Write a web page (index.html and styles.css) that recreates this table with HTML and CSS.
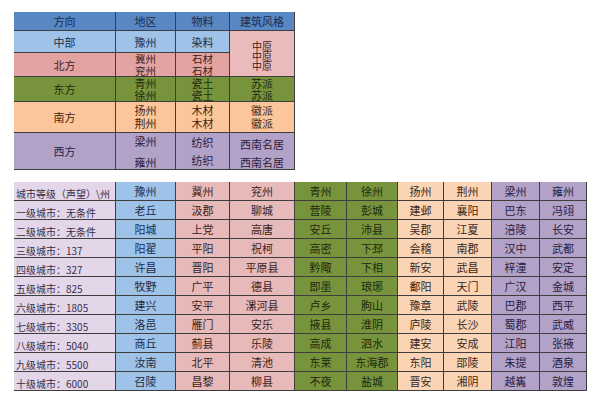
FILE: index.html
```html
<!DOCTYPE html>
<html lang="zh">
<head>
<meta charset="utf-8">
<link rel="stylesheet" href="styles.css">
</head>
<body>
<div class="page">
  <div class="t1">
    <div class="c hd">方向</div>
    <div class="c hd">地区</div>
    <div class="c hd">物料</div>
    <div class="c hd">建筑风格</div>

    <div class="c blue">中部</div>
    <div class="c blue">豫州</div>
    <div class="c blue">染料</div>
    <div class="c pinklt merged"><span>中原</span><span>中原</span><span>中原</span></div>

    <div class="c pink">北方</div>
    <div class="c pink tight"><span>冀州</span><span>兖州</span></div>
    <div class="c pink tight"><span>石材</span><span>石材</span></div>

    <div class="c green">东方</div>
    <div class="c green"><span>青州</span><span>徐州</span></div>
    <div class="c green"><span>瓷土</span><span>瓷土</span></div>
    <div class="c green"><span>苏派</span><span>苏派</span></div>

    <div class="c peach">南方</div>
    <div class="c peach lh13"><span>扬州</span><span>荆州</span></div>
    <div class="c peach lh13"><span>木材</span><span>木材</span></div>
    <div class="c peach lh13"><span>徽派</span><span>徽派</span></div>

    <div class="c lav">西方</div>
    <div class="c lav lh20"><span>梁州</span><span>雍州</span></div>
    <div class="c lav lh18"><span>纺织</span><span>纺织</span></div>
    <div class="c lav lh18 low"><span>西南名居</span><span>西南名居</span></div>
  </div>

  <div class="t2">
    <div class="c lbl">城市等级（声望）\州</div>
    <div class="c blue">豫州</div><div class="c pinkb">冀州</div><div class="c pinkb">兖州</div><div class="c green">青州</div><div class="c green">徐州</div><div class="c peachb">扬州</div><div class="c peachb">荆州</div><div class="c lav">梁州</div><div class="c lav">雍州</div>

    <div class="c lbl">一级城市：无条件</div>
    <div class="c blue">老丘</div><div class="c pinkb">汲郡</div><div class="c pinkb">聊城</div><div class="c green">营陵</div><div class="c green">彭城</div><div class="c peachb">建邺</div><div class="c peachb">襄阳</div><div class="c lav">巴东</div><div class="c lav">冯翊</div>

    <div class="c lbl">二级城市：无条件</div>
    <div class="c blue">阳城</div><div class="c pinkb">上党</div><div class="c pinkb">高唐</div><div class="c green">安丘</div><div class="c green">沛县</div><div class="c peachb">吴郡</div><div class="c peachb">江夏</div><div class="c lav">涪陵</div><div class="c lav">长安</div>

    <div class="c lbl">三级城市：137</div>
    <div class="c blue">阳翟</div><div class="c pinkb">平阳</div><div class="c pinkb">祝柯</div><div class="c green">高密</div><div class="c green">下邳</div><div class="c peachb">会稽</div><div class="c peachb">南郡</div><div class="c lav">汉中</div><div class="c lav">武都</div>

    <div class="c lbl">四级城市：327</div>
    <div class="c blue">许昌</div><div class="c pinkb">晋阳</div><div class="c pinkb">平原县</div><div class="c green">黔陬</div><div class="c green">下相</div><div class="c peachb">新安</div><div class="c peachb">武昌</div><div class="c lav">梓潼</div><div class="c lav">安定</div>

    <div class="c lbl">五级城市：825</div>
    <div class="c blue">牧野</div><div class="c pinkb">广平</div><div class="c pinkb">德县</div><div class="c green">即墨</div><div class="c green">琅琊</div><div class="c peachb">鄱阳</div><div class="c peachb">天门</div><div class="c lav">广汉</div><div class="c lav">金城</div>

    <div class="c lbl">六级城市：1805</div>
    <div class="c blue">建兴</div><div class="c pinkb">安平</div><div class="c pinkb">漯河县</div><div class="c green">卢乡</div><div class="c green">朐山</div><div class="c peachb">豫章</div><div class="c peachb">武陵</div><div class="c lav">巴郡</div><div class="c lav">西平</div>

    <div class="c lbl">七级城市：3305</div>
    <div class="c blue">洛邑</div><div class="c pinkb">雁门</div><div class="c pinkb">安乐</div><div class="c green">掖县</div><div class="c green">淮阴</div><div class="c peachb">庐陵</div><div class="c peachb">长沙</div><div class="c lav">蜀郡</div><div class="c lav">武威</div>

    <div class="c lbl">八级城市：5040</div>
    <div class="c blue">商丘</div><div class="c pinkb">蓟县</div><div class="c pinkb">乐陵</div><div class="c green">高成</div><div class="c green">泗水</div><div class="c peachb">建安</div><div class="c peachb">安成</div><div class="c lav">江阳</div><div class="c lav">张掖</div>

    <div class="c lbl">九级城市：5500</div>
    <div class="c blue">汝南</div><div class="c pinkb">北平</div><div class="c pinkb">清池</div><div class="c green">东莱</div><div class="c green">东海郡</div><div class="c peachb">东阳</div><div class="c peachb">邵陵</div><div class="c lav">朱提</div><div class="c lav">酒泉</div>

    <div class="c lbl">十级城市：6000</div>
    <div class="c blue">召陵</div><div class="c pinkb">昌黎</div><div class="c pinkb">柳县</div><div class="c green">不夜</div><div class="c green">盐城</div><div class="c peachb">晋安</div><div class="c peachb">湘阴</div><div class="c lav">越巂</div><div class="c lav">敦煌</div>
  </div>
</div>
</body>
</html>
```

FILE: styles.css
```css
html, body {
  margin: 0;
  padding: 0;
  background: #ffffff;
}

body {
  font-family: "Noto Sans CJK SC", "Noto Sans", sans-serif;
  color: #2b2b2b;
}

.page {
  display: flex;
  flex-direction: column;
  align-items: flex-start;
  gap: 12px;
  padding: 12px 0 0 14px;
}

.t1 {
  display: grid;
  grid-template-columns: 101px 59px 53px 64px;
  grid-template-rows: 18px 21px 23px 24px 30px 36px;
  gap: 1px;
  background: #3e3e3e;
  border-right: 1px solid #3e3e3e;
  border-bottom: 1px solid #3e3e3e;
}

.t2 {
  display: grid;
  grid-template-columns: 101px 59px 53px 64px 51px 50px 45px 47px 47px 46px;
  grid-auto-rows: 18px;
  gap: 1px;
  background: #3e3e3e;
  border-right: 1px solid #3e3e3e;
  border-bottom: 1px solid #3e3e3e;
}

.c {
  display: flex;
  flex-direction: column;
  justify-content: center;
  align-items: center;
  font-size: 11px;
  line-height: 12px;
  white-space: nowrap;
}

.c span {
  display: block;
}

.merged {
  grid-row: span 2;
  font-size: 10px;
  line-height: 10px;
  padding-top: 4px;
}

.tight {
  font-size: 10.5px;
  line-height: 11.5px;
}

.lh13 { line-height: 13px; }
.lh18 { line-height: 18px; }
.lh20 { line-height: 21px; padding-top: 2px; }
.low { padding-top: 4px; }

.hd {
  background: #5987c4;
  color: #1c2d4a;
}

.blue {
  background: #9fc2e8;
  color: #1c2d4a;
}

.pink {
  background: #e3a3a3;
  color: #3a1f1f;
}

.pinklt {
  background: #ebbaba;
  color: #3a1f1f;
}

.pinkb {
  background: #e7b9b8;
  color: #3a1f1f;
}

.green {
  background: #77933c;
  color: #1d2a0c;
}

.peach {
  background: #fbc69c;
  color: #3b2716;
}

.peachb {
  background: #fad4b5;
  color: #3b2716;
}

.lav {
  background: #b2a2c8;
  color: #2a2040;
}

.lbl {
  background: #e2d6e8;
  color: #3a2f4a;
  align-items: flex-start;
  justify-content: flex-end;
  padding-left: 2px;
  font-size: 10px;
  line-height: 12px;
}
```
